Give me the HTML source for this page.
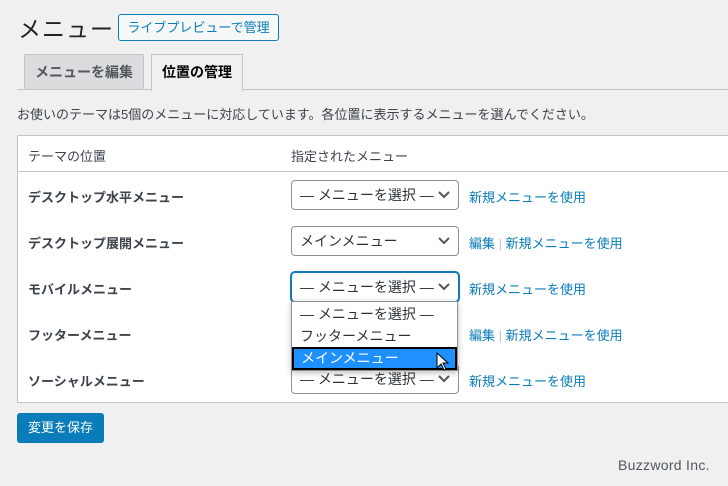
<!DOCTYPE html>
<html><head><meta charset="utf-8"><style>
*{box-sizing:border-box;margin:0;padding:0}
body{width:728px;height:486px;background:#f0f0f1;font-family:"Liberation Sans","Noto Sans CJK JP",sans-serif;color:#3c434a;position:relative;overflow:hidden;font-size:13px}
.a{position:absolute;white-space:nowrap}
.h1{left:18px;top:10px;font-size:23px;color:#1d2327;letter-spacing:1px}
.pbtn{left:118px;top:14px;width:161px;height:27px;border:1px solid #0a7cba;border-radius:3px;color:#0a7cba;font-size:13px;line-height:25px;text-align:center;background:#f6f7f7}
.tab{top:54px;height:36px;border:1px solid #c3c4c7;border-bottom:none;font-size:14px;font-weight:bold;line-height:34px;text-align:center}
.line{left:17px;top:89px;width:711px;height:1px;background:#c3c4c7}
.box{left:17px;top:135px;width:720px;height:268px;background:#fff;border:1px solid #c3c4c7}
.lbl{left:28px;font-size:13px;font-weight:bold;color:#3c434a}
.sel{left:291px;width:168px;height:30px;border:1px solid #8c8f94;border-radius:4px;background:#fff;font-size:14px;line-height:28px;padding-left:8px;color:#2c3338}
.sel svg{position:absolute;right:8px;top:10px}
.lk{color:#0a7cba;font-size:13px}
.sep{color:#c3c4c7}
</style></head><body>
<div class="a h1">メニュー</div>
<div class="a pbtn">ライブプレビューで管理</div>
<div class="a tab" style="left:24px;width:120px;background:#dcdcde;color:#50575e">メニューを編集</div>
<div class="a tab" style="left:151px;width:92px;background:#f0f0f1;color:#000;height:37px;z-index:2">位置の管理</div>
<div class="a line"></div>
<div class="a" style="left:17px;top:104px;font-size:13px">お使いのテーマは5個のメニューに対応しています。各位置に表示するメニューを選んでください。</div>
<div class="a box"></div>
<div class="a" style="left:17px;top:171px;width:711px;height:1px;background:#c3c4c7"></div>
<div class="a" style="left:28px;top:146px;font-size:13px">テーマの位置</div>
<div class="a" style="left:291px;top:146px;font-size:13px">指定されたメニュー</div>

<div class="a lbl" style="top:187px">デスクトップ水平メニュー</div>
<div class="a lbl" style="top:233px">デスクトップ展開メニュー</div>
<div class="a lbl" style="top:279px">モバイルメニュー</div>
<div class="a lbl" style="top:325px">フッターメニュー</div>
<div class="a lbl" style="top:371px">ソーシャルメニュー</div>

<div class="a sel" style="top:180px">— メニューを選択 —<svg width="12" height="8"><path d="M1 1l5 5 5-5" fill="none" stroke="#50575e" stroke-width="2"/></svg></div>
<div class="a lk" style="left:469px;top:187px">新規メニューを使用</div>
<div class="a sel" style="top:226px">メインメニュー<svg width="12" height="8"><path d="M1 1l5 5 5-5" fill="none" stroke="#50575e" stroke-width="2"/></svg></div>
<div class="a lk" style="left:469px;top:233px">編集 <span class="sep">|</span> 新規メニューを使用</div>
<div class="a sel" style="top:272px;border-color:#0a7cba;box-shadow:0 0 0 1px #0a7cba">— メニューを選択 —<svg width="12" height="8"><path d="M1 1l5 5 5-5" fill="none" stroke="#50575e" stroke-width="2"/></svg></div>
<div class="a lk" style="left:469px;top:279px">新規メニューを使用</div>
<div class="a lk" style="left:469px;top:325px">編集 <span class="sep">|</span> 新規メニューを使用</div>
<div class="a sel" style="top:364px">— メニューを選択 —<svg width="12" height="8"><path d="M1 1l5 5 5-5" fill="none" stroke="#50575e" stroke-width="2"/></svg></div>
<div class="a lk" style="left:469px;top:371px">新規メニューを使用</div>

<div class="a" style="left:291px;top:301px;width:167px;height:70px;background:#fff;border:1px solid #8c8f94;box-shadow:0 2px 6px rgba(0,0,0,.25);z-index:3;font-size:14px;color:#2c3338">
<div style="position:absolute;left:8px;top:2px">— メニューを選択 —</div>
<div style="position:absolute;left:8px;top:24px">フッターメニュー</div>
<div style="position:absolute;left:0;top:45px;width:165px;height:23px;background:#1e90ff;border:2px solid #000;color:#fff;padding-left:7px;line-height:18px">メインメニュー</div>
<svg style="position:absolute;left:144px;top:50px" width="14" height="20"><path d="M1 1v15l4-4 3 6 2-1-3-6h5z" fill="#fff" stroke="#000" stroke-width="1"/></svg>
</div>

<div class="a" style="left:17px;top:413px;width:87px;height:30px;background:#0a7cba;border-radius:3px;color:#fff;font-size:13px;line-height:30px;text-align:center">変更を保存</div>
<div class="a" style="left:618px;top:457px;font-size:14px;color:#50575e;letter-spacing:0.3px">Buzzword Inc.</div>
</body></html>
